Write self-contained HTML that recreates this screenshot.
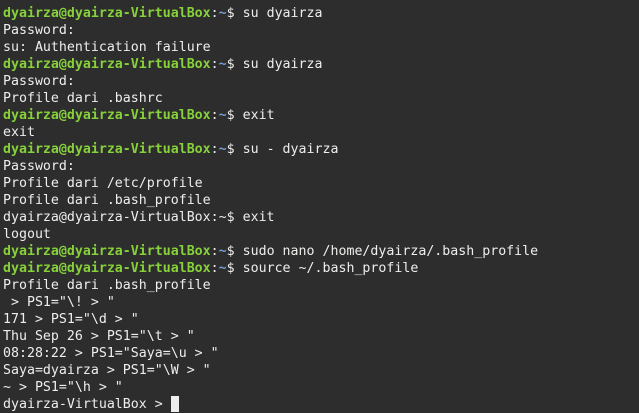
<!DOCTYPE html>
<html><head><style>
html,body{margin:0;padding:0;width:639px;height:413px;overflow:hidden;background:#2d2d2d;}
pre{margin:0;padding:5px 0 0 3px;font-family:"DejaVu Sans Mono","Liberation Mono",monospace;font-size:13.27px;line-height:17px;color:#eeeeec;}
.g{color:#87d13a;font-weight:bold}
.b{color:#729fcf;font-weight:bold}
.c{display:inline-block;width:8px;height:16px;background:#eeeeec;vertical-align:-4px}
</style></head><body><pre><span class="g">dyairza@dyairza-VirtualBox</span>:<span class="b">~</span>$ su dyairza
Password:
su: Authentication failure
<span class="g">dyairza@dyairza-VirtualBox</span>:<span class="b">~</span>$ su dyairza
Password:
Profile dari .bashrc
<span class="g">dyairza@dyairza-VirtualBox</span>:<span class="b">~</span>$ exit
exit
<span class="g">dyairza@dyairza-VirtualBox</span>:<span class="b">~</span>$ su - dyairza
Password:
Profile dari /etc/profile
Profile dari .bash_profile
dyairza@dyairza-VirtualBox:~$ exit
logout
<span class="g">dyairza@dyairza-VirtualBox</span>:<span class="b">~</span>$ sudo nano /home/dyairza/.bash_profile
<span class="g">dyairza@dyairza-VirtualBox</span>:<span class="b">~</span>$ source ~/.bash_profile
Profile dari .bash_profile
 &gt; PS1="\! &gt; "
171 &gt; PS1="\d &gt; "
Thu Sep 26 &gt; PS1="\t &gt; "
08:28:22 &gt; PS1="Saya=\u &gt; "
Saya=dyairza &gt; PS1="\W &gt; "
~ &gt; PS1="\h &gt; "
dyairza-VirtualBox &gt; <span class="c"></span></pre></body></html>
